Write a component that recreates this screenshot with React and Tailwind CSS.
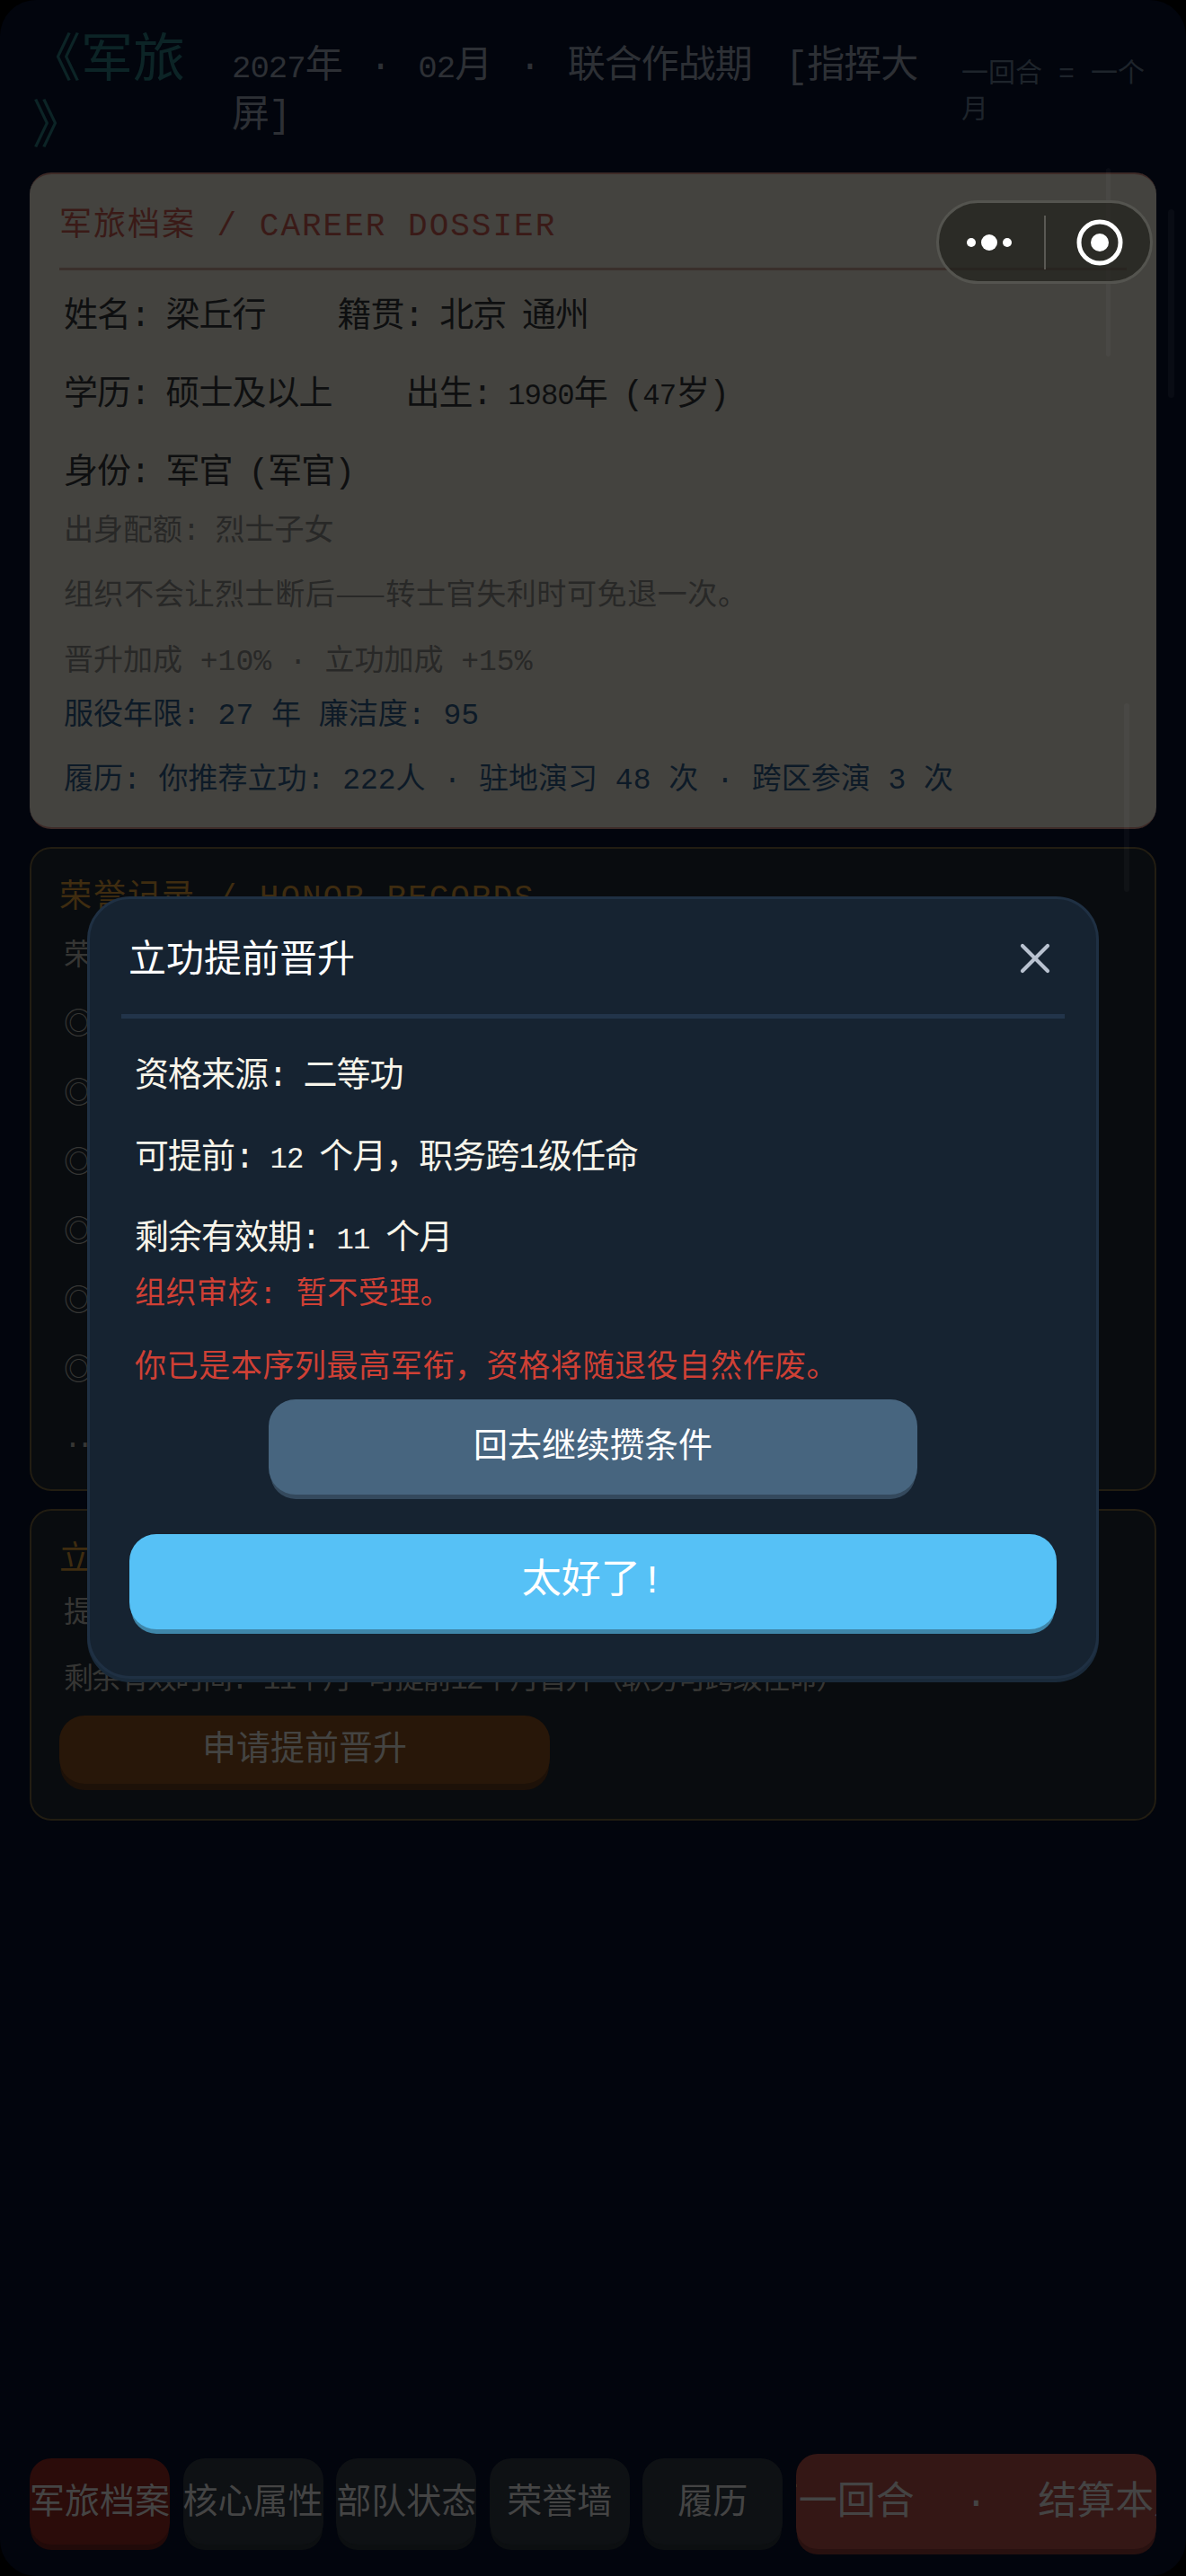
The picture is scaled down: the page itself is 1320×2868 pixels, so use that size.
import React from 'react';
import { X } from 'lucide-react';

const font = { fontFamily: '"Liberation Mono", "Noto Sans CJK SC", monospace' };

// digits in the reference are narrower than the mono ones
const D = ({ children }) => <span className="text-[0.85em] leading-[0]">{children}</span>;

const NavBtn = ({ children, active }) => (
  <div className={`w-[156px] h-[96px] shrink-0 pt-[6px] flex items-center justify-center overflow-hidden whitespace-nowrap rounded-[24px] text-[39px] text-[#444444] ${active ? 'bg-[#2b0c0a] shadow-[0_7px_0_-1px_#210a09]' : 'bg-[#0e1114] shadow-[0_7px_0_-1px_#0c0f11]'}`}>
    {children}
  </div>
);

const RECORD_ROWS = [0, 1, 2, 3, 4, 5];

export default function App() {
  return (
    <div style={font} className="relative w-[1320px] h-[2868px] bg-black overflow-hidden">
      <div className="w-full h-full flex flex-col rounded-[40px] bg-[#02050d] overflow-hidden">
        {/* header */}
        <div className="h-[192px] shrink-0 flex items-start gap-[32px] px-[36px]">
          <div className="w-[190px] shrink-0 pt-[33px] -ml-[4px] mr-[4px] text-[58px] leading-[74px] text-[#0c2426]">
            《军旅<br /><span className="ml-[4px]">》</span>
          </div>
          <div className="w-[780px] shrink-0 pt-[48px] text-[42px] leading-[55px] text-[#2d3035] [word-spacing:6px] tracking-[-1px]">
            <div><D>2027</D>年 · <D>02</D>月 · 联合作战期 <span className="ml-[7px]">[</span>指挥大</div>
            <div>屏]</div>
          </div>
          <div className="w-[214px] shrink-0 pt-[63px] text-[30px] leading-[40px] text-[#1e242b]">
            一回合 = 一个月
          </div>
        </div>

        {/* cards */}
        <div className="flex-1 flex flex-col gap-[20px] px-[33px]">
          <div className="rounded-[24px] border-t-[2px] border-b-[2px] border-[#3d2a27] bg-[#44433f] px-[33px] pt-[34px] pb-[29px]">
            <div className="text-[36px] leading-[50px] tracking-[2px] text-[#3a1a17] pb-[20px] border-b-[3px] border-[#3a2f2b]">
              军旅档案 / CAREER DOSSIER
            </div>
            <div className="pl-[5px] pt-[25px]">
              <div className="flex gap-[80px] text-[38px] leading-[54px] text-[#0e0f10] tracking-[-1px] [word-spacing:-4px]">
                <span>姓名: 梁丘行</span>
                <span>籍贯: 北京 通州</span>
              </div>
              <div className="flex gap-[82px] mt-[33px] text-[38px] leading-[54px] text-[#0e0f10] tracking-[-1px] [word-spacing:-4px]">
                <span>学历: 硕士及以上</span>
                <span>出生: <D>1980</D>年 (<D>47</D>岁)</span>
              </div>
              <div className="mt-[33px] text-[38px] leading-[54px] text-[#0e0f10] tracking-[-1px] [word-spacing:-4px]">身份: 军官 (军官)</div>
              <div className="mt-[17px] text-[33px] leading-[44px] text-[#282827] [word-spacing:-3px]">出身配额: 烈士子女</div>
              <div className="mt-[28px] text-[33px] leading-[44px] text-[#282827] tracking-[0.6px]">
                组织不会让烈士断后<span className="leading-[0] [font-family:'Noto_Sans_CJK_SC']">——</span>转士官失利时可免退一次。
              </div>
              <div className="mt-[29px] text-[33px] leading-[44px] text-[#282827]">晋升加成 +10% · 立功加成 +15%</div>
              <div className="mt-[16px] text-[33px] leading-[44px] text-[#0d1a27]">服役年限: 27 年  廉洁度: 95</div>
              <div className="mt-[28px] text-[33px] leading-[44px] text-[#0d1a27]">履历: 你推荐立功: 222人 · 驻地演习 48 次 · 跨区参演 3 次</div>
            </div>
          </div>

          <div className="rounded-[24px] border-[2px] border-[#221d12] bg-[#090c0f] px-[31px] pt-[31px] pb-[33px]">
            <div className="text-[36px] leading-[50px] tracking-[2px] text-[#3f2c10]">荣誉记录 / HONOR RECORDS</div>
            <div className="pl-[5px] mt-[18px] text-[33px] leading-[44px] text-[#363634]">荣</div>
            {RECORD_ROWS.map((i) => (
              <div key={i} className="pl-[5px] mt-[33px] text-[33px] leading-[44px] text-[#363634]">◎</div>
            ))}
            <div className="pl-[5px] mt-[31px] text-[33px] leading-[44px] text-[#363634] tracking-[-6px]">...</div>
          </div>

          <div className="rounded-[24px] border-[2px] border-[#221d12] bg-[#090c0f] px-[31px] pt-[31px] pb-[39px]">
            <div className="text-[36px] leading-[50px] tracking-[2px] text-[#3f2c10]">立功</div>
            <div className="pl-[5px] mt-[13px] text-[33px] leading-[44px] text-[#363634]">提</div>
            <div className="pl-[5px] mt-[30px] text-[33px] leading-[44px] text-[#363634] tracking-[-2px]">剩余有效时间: 11个月 可提前12个月晋升（职务可跨级任命）</div>
            <div className="mt-[16px] w-[546px] h-[76px] flex items-center justify-center rounded-[28px] bg-[#281709] shadow-[0_8px_0_-1px_#1d1108] text-[38px] text-[#444442]">
              申请提前晋升
            </div>
          </div>
        </div>

        {/* bottom nav */}
        <div className="flex items-center gap-[14.6px] px-[33px] pb-[30px]">
          <NavBtn active>军旅档案</NavBtn>
          <NavBtn>核心属性</NavBtn>
          <NavBtn>部队状态</NavBtn>
          <NavBtn>荣誉墙</NavBtn>
          <NavBtn>履历</NavBtn>
          <div className="flex-1 h-[106px] pt-[6px] flex items-center justify-center overflow-hidden whitespace-nowrap rounded-[24px] bg-[#341715] shadow-[0_7px_0_-1px_#281110] text-[43px] text-[#444444] [word-spacing:30px]">
            下一回合 · 结算本月
          </div>
        </div>
      </div>

      {/* faint scrollbars */}
      <div className="absolute left-[1231px] top-[187px] w-[5px] h-[210px] rounded-full bg-white/[0.03]" />
      <div className="absolute left-[1300px] top-[233px] w-[7px] h-[210px] rounded-full bg-white/[0.03]" />
      <div className="absolute left-[1251px] top-[783px] w-[6px] h-[210px] rounded-full bg-white/[0.03]" />

      {/* capsule */}
      <div className="absolute left-[1042px] top-[223px] w-[241px] h-[93px] rounded-full border-[3px] border-[#54544f] bg-[#201f1b]/[.67]">
        <svg width="241" height="93" viewBox="0 0 241 93" className="absolute -left-[3px] -top-[3px]">
          <circle cx="39" cy="47" r="5" fill="#fff" />
          <circle cx="59" cy="47" r="9" fill="#fff" />
          <circle cx="79" cy="47" r="5" fill="#fff" />
          <rect x="120" y="17" width="2" height="60" fill="#5a5954" />
          <circle cx="182" cy="47" r="23" fill="none" stroke="#fff" strokeWidth="5" />
          <circle cx="182" cy="47" r="10" fill="#fff" />
        </svg>
      </div>

      {/* modal */}
      <div className="absolute left-[97px] top-[998px] w-[1126px] h-[871px] rounded-[48px] border-[3px] border-[#1f3043] bg-[#162331] shadow-[0_4px_0_#1a2a3a]">
        <div className="mx-[35px] pt-[40px] pb-[28px] border-b-[5px] border-[#22344a] flex items-center justify-between">
          <div className="pl-[8px] text-[42px] leading-[60px] text-white">立功提前晋升</div>
          <X size={56} strokeWidth={1.8} className="text-[#b9c2d0] mr-[5px] -translate-y-[4px]" />
        </div>
        <div className="px-[50px] text-[#f8f5ea]">
          <div className="mt-[38px] text-[38px] leading-[54px] tracking-[-1px] [word-spacing:-4px]">资格来源: 二等功</div>
          <div className="mt-[37px] text-[38px] leading-[54px] tracking-[-1px] [word-spacing:-4px]">可提前: <D>12</D> 个月，职务跨1级任命</div>
          <div className="mt-[36px] text-[38px] leading-[54px] tracking-[-1px] [word-spacing:-4px]">剩余有效期: <D>11</D> 个月</div>
          <div className="mt-[12px] text-[34px] leading-[46px] tracking-[0.5px] text-[#cf4035]">组织审核: 暂不受理。</div>
          <div className="mt-[36px] text-[35px] leading-[46px] tracking-[0.6px] text-[#cf4035]">你已是本序列最高军衔，资格将随退役自然作废。</div>
        </div>
        <div className="mt-[11px] mx-auto w-[722px] h-[106px] flex items-center justify-center rounded-[30px] bg-[#47657f] shadow-[0_7px_0_-2px_#34495d] text-[38px] text-white">
          回去继续攒条件
        </div>
        <div className="mt-[44px] mx-auto w-[1032px] h-[106px] flex items-center justify-center rounded-[30px] bg-[#56c1f6] shadow-[0_7px_0_-2px_#3f86a9] text-[44px] text-white">
          太好了!
        </div>
      </div>
    </div>
  );
}
